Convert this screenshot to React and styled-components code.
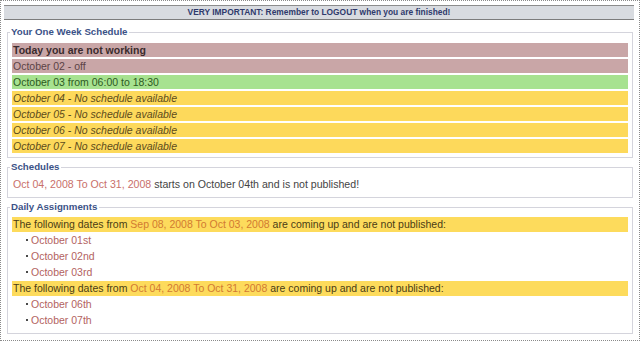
import React from "react";
import styled, { createGlobalStyle } from "styled-components";

const Global = createGlobalStyle`
  html, body { margin: 0; padding: 0; background: #fff; }
  body { font-family: "Liberation Sans", Arial, sans-serif; }
  * { box-sizing: border-box; }
`;

const Frame = styled.div`
  width: 640px;
  height: 341px;
  border: 1px dotted #8a8a8a;
  padding: 4px 5px 0 3px;
  background: #fff;
  overflow: hidden;
`;

const Banner = styled.div`
  height: 15px;
  background: #d8dbe0;
  border-top: 1px solid #8c8c8c;
  border-bottom: 1px solid #7c7c7c;
  color: #2f3a6c;
  font-weight: bold;
  font-size: 8.4px;
  line-height: 13px;
  text-align: center;
`;

const Box = styled.fieldset`
  margin: ${(p) => p.$mt}px 1px 0 3px;
  padding: ${(p) => p.$pt}px 4px ${(p) => p.$pb}px 4px;
  border: 1px solid #d4d4dc;
  min-width: 0;
`;

const Legend = styled.legend`
  padding: 0 2px 0 1px;
  margin-left: -2px;
  font-weight: bold;
  font-size: 9.7px;
  line-height: 12px;
  color: #3b5287;
`;

const List = styled.div`
  display: flex;
  flex-direction: column;
  gap: 2px;
`;

const tones = {
  pink: { bg: "#c9a6a7", fg: "#5b4346" },
  head: { bg: "#c9a6a7", fg: "#3a2b2d" },
  green: { bg: "#a7e290", fg: "#2c5a22" },
  yellow: { bg: "#fdd95b", fg: "#5c4b1c" },
};

const Row = styled.div`
  height: 14px;
  padding-left: 1px;
  background: ${(p) => tones[p.$tone].bg};
  color: ${(p) => tones[p.$tone].fg};
  font-size: 10.5px;
  font-weight: ${(p) => (p.$bold ? "bold" : "normal")};
  font-style: ${(p) => (p.$italic ? "italic" : "normal")};
  line-height: 14px;
  white-space: nowrap;
`;

const Line = styled.div`
  font-size: 10.6px;
  line-height: 14px;
  color: #444;
  padding-left: 1px;
`;

const DateText = styled.span`
  color: ${(p) => p.$c || "#c9706a"};
`;

const Notice = styled.div`
  height: 15px;
  margin: ${(p) => p.$mt || 0}px 0 0 0;
  background: #fddb5c;
  color: #4a3c15;
  font-size: 10.5px;
  line-height: 15px;
  padding-left: 1px;
  white-space: nowrap;
`;

const Items = styled.ul`
  list-style: none;
  margin: 0;
  padding: 0 0 0 14px;
`;

const Item = styled.li`
  display: flex;
  align-items: center;
  gap: 3px;
  height: 16px;
  font-size: 10.5px;
  color: #b3635f;
  &::before {
    content: "";
    width: 2px;
    height: 2px;
    background: #4a4a4a;
  }
`;

const week = [
  { t: "Today you are not working", tone: "head", bold: true },
  { t: "October 02 - off", tone: "pink" },
  { t: "October 03 from 06:00 to 18:30", tone: "green" },
  { t: "October 04 - No schedule available", tone: "yellow", italic: true },
  { t: "October 05 - No schedule available", tone: "yellow", italic: true },
  { t: "October 06 - No schedule available", tone: "yellow", italic: true },
  { t: "October 07 - No schedule available", tone: "yellow", italic: true },
];

export default function App() {
  return (
    <>
      <Global />
      <Frame>
        <Banner>VERY IMPORTANT: Remember to LOGOUT when you are finished!</Banner>

        <Box $mt={6} $pt={5} $pb={4}>
          <Legend>Your One Week Schedule</Legend>
          <List>
            {week.map((r) => (
              <Row key={r.t} $tone={r.tone} $bold={r.bold} $italic={r.italic}>
                {r.t}
              </Row>
            ))}
          </List>
        </Box>

        <Box $mt={3} $pt={4} $pb={6}>
          <Legend>Schedules</Legend>
          <Line>
            <DateText>Oct 04, 2008 To Oct 31, 2008</DateText> starts on October
            04th and is not published!
          </Line>
        </Box>

        <Box $mt={3} $pt={4} $pb={5}>
          <Legend>Daily Assignments</Legend>
          <Notice>
            The following dates from{" "}
            <DateText $c="#d27a32">Sep 08, 2008 To Oct 03, 2008</DateText> are
            coming up and are not published:
          </Notice>
          <Items>
            <Item>October 01st</Item>
            <Item>October 02nd</Item>
            <Item>October 03rd</Item>
          </Items>
          <Notice $mt={1}>
            The following dates from{" "}
            <DateText $c="#d27a32">Oct 04, 2008 To Oct 31, 2008</DateText> are
            coming up and are not published:
          </Notice>
          <Items>
            <Item>October 06th</Item>
            <Item>October 07th</Item>
          </Items>
        </Box>
      </Frame>
    </>
  );
}
